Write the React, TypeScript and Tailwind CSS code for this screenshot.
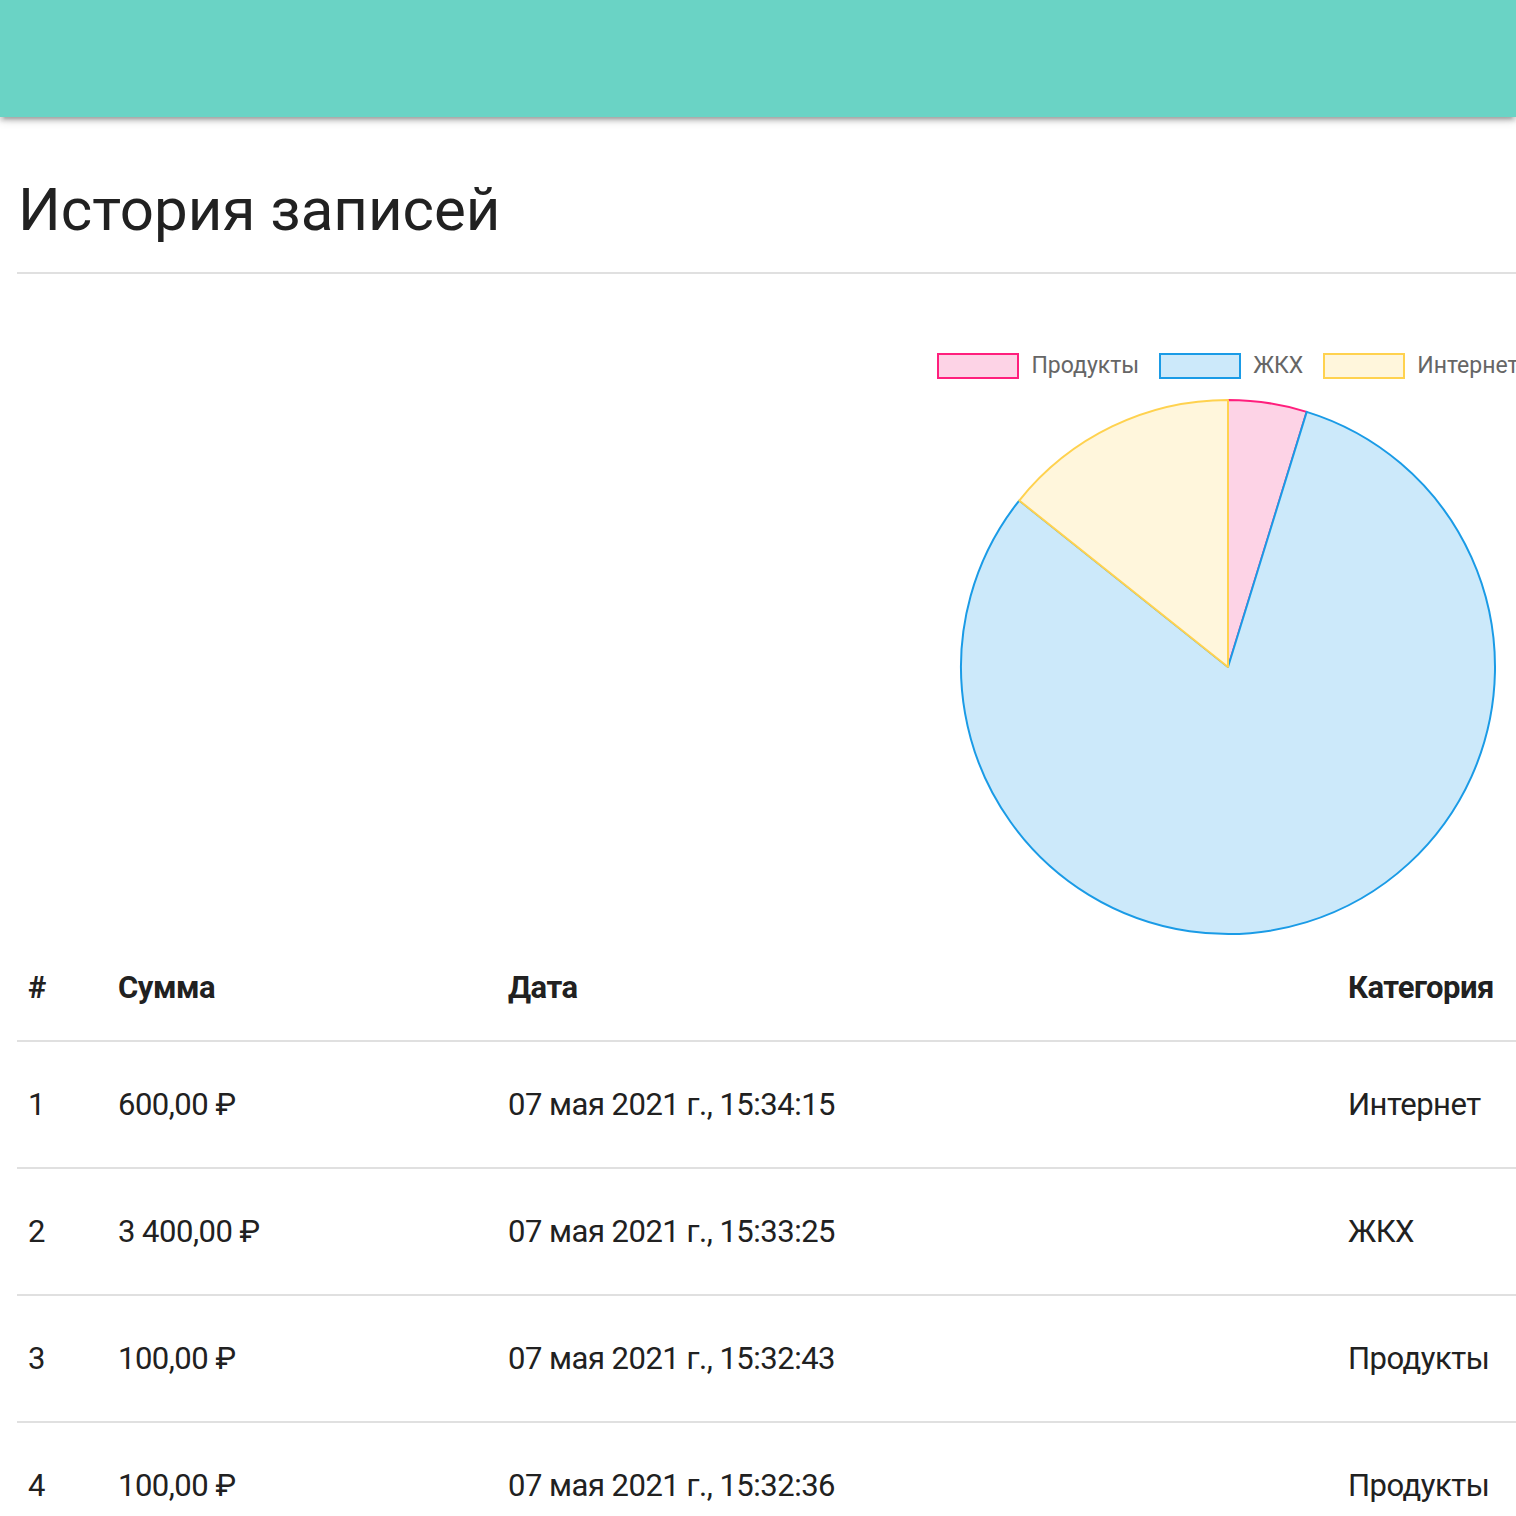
import React from "react";

const rows = [
  { id: 1, sum: "600,00 ₽", date: "07 мая 2021 г., 15:34:15", cat: "Интернет" },
  { id: 2, sum: "3 400,00 ₽", date: "07 мая 2021 г., 15:33:25", cat: "ЖКХ" },
  { id: 3, sum: "100,00 ₽", date: "07 мая 2021 г., 15:32:43", cat: "Продукты" },
  { id: 4, sum: "100,00 ₽", date: "07 мая 2021 г., 15:32:36", cat: "Продукты" },
];

const legend = [
  { label: "Продукты", box: "border-[#ff1f7d] bg-[#fdd3e6]" },
  { label: "ЖКХ", box: "border-[#1a9be6] bg-[#cce9fa]" },
  { label: "Интернет", box: "border-[#ffd24f] bg-[#fff6dc]" },
];

function PieChart() {
  return (
    <svg width="536" height="536" viewBox="0 0 536 536" className="overflow-visible">
      {/* Продукты */}
      <path d="M268,268 L268,1 A267,267 0 0 1 346.70,12.86 Z" fill="#fdd3e6" stroke="#ff1f7d" strokeWidth="2" strokeLinejoin="round" />
      {/* ЖКХ */}
      <path d="M268,268 L346.70,12.86 A267,267 0 1 1 59.25,101.53 Z" fill="#cce9fa" stroke="#1a9be6" strokeWidth="2" strokeLinejoin="round" />
      {/* Интернет */}
      <path d="M268,268 L59.25,101.53 A267,267 0 0 1 268,1 Z" fill="#fff6dc" stroke="#ffd24f" strokeWidth="2" strokeLinejoin="round" />
    </svg>
  );
}

export default function App() {
  return (
    <div className="w-[1516px] h-[1516px] overflow-hidden bg-white text-[#212121]" style={{ fontFamily: "Roboto, sans-serif" }}>
      {/* Navbar */}
      <nav className="h-[117px] w-full bg-[#6ad3c5] shadow-[0_4px_4px_0_rgba(0,0,0,0.14),0_6px_2px_-4px_rgba(0,0,0,0.12),0_2px_10px_0_rgba(0,0,0,0.2)]" />

      <div className="w-[1540px] pl-[17px]">
        {/* Title */}
        <div className="pt-[59px] border-b-2 border-[#e0e0e0] pb-[29px]">
          <h3 className="text-[60px] leading-[67px] font-normal pl-[1px]">История записей</h3>
        </div>

        {/* Chart */}
        <div className="ml-[911px] w-[600px] pt-[79px] flex flex-col items-center">
          <div className="flex items-center h-[26px] gap-[20px] whitespace-nowrap">
            {legend.map((l) => (
              <div key={l.label} className="flex items-center gap-[12px]">
                <span className={`block w-[82px] h-[26px] border-2 ${l.box}`} />
                <span className="text-[23px] leading-[26px] text-[#666666]">{l.label}</span>
              </div>
            ))}
          </div>
          <div className="mt-[20px]">
            <PieChart />
          </div>
        </div>

        {/* Table */}
        <table className="w-[1523px] border-collapse text-[31px] tracking-[-0.5px] -mt-[2px]">
          <thead>
            <tr className="h-[108px] border-b-2 border-[#e0e0e0]">
              <th className="w-[90px] text-left font-bold pl-[11px] pt-[3px]">#</th>
              <th className="w-[390px] text-left font-bold pl-[11px] pt-[3px]">Сумма</th>
              <th className="w-[840px] text-left font-bold pl-[11px] pt-[3px]">Дата</th>
              <th className="text-left font-bold pl-[11px] pt-[3px]">Категория</th>
            </tr>
          </thead>
          <tbody>
            {rows.map((r) => (
              <tr key={r.id} className="h-[127px] border-b-2 border-[#e0e0e0]">
                <td className="pl-[11px] pt-[1px]">{r.id}</td>
                <td className="pl-[11px] pt-[1px]">{r.sum}</td>
                <td className="pl-[11px] pt-[1px]">{r.date}</td>
                <td className="pl-[11px] pt-[1px]">{r.cat}</td>
              </tr>
            ))}
          </tbody>
        </table>
      </div>
    </div>
  );
}
